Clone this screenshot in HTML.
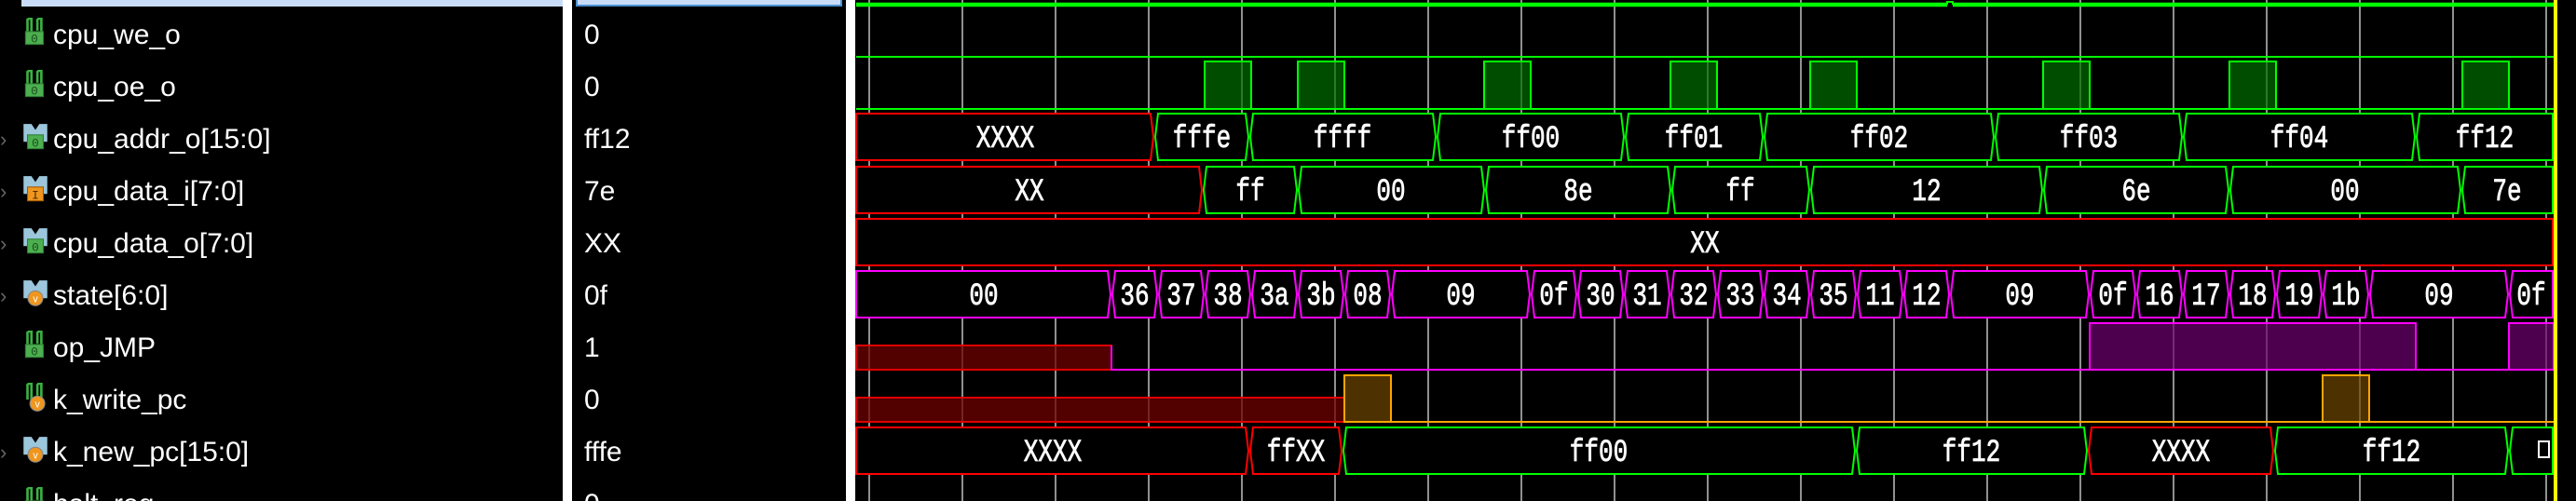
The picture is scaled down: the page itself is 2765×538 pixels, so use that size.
<!DOCTYPE html>
<html><head><meta charset="utf-8">
<style>
html,body{margin:0;padding:0;background:#000;width:2765px;height:538px;overflow:hidden;position:relative}
.n{position:absolute;left:0;width:604px;height:56px;line-height:56px;color:#fff;font-family:"Liberation Sans",sans-serif;font-size:30px;white-space:nowrap;overflow:hidden}
.n span{position:absolute;left:57px;top:0}
.n svg{position:absolute;left:23px;top:9px}
.n i{position:absolute;left:0;top:0;color:#666;font-style:normal;font-size:22px}
.v{position:absolute;left:627px;height:56px;line-height:56px;color:#fff;font-family:"Liberation Sans",sans-serif;font-size:30px;overflow:hidden}
.last{height:24px}
</style></head><body>
<svg width="0" height="0" style="position:absolute">
<defs>
<symbol id="so" viewBox="0 0 28 32"><path d="M6 1v16M6 1h4v16M16 1v12M16 1h4v16" stroke="#3cb043" stroke-width="2.5" fill="none"/><rect x="4" y="14" width="18" height="13" fill="#4caf50" stroke="#2e7d32"/><text x="13" y="25" font-family="Liberation Mono" font-size="12" fill="#1b4d1b" text-anchor="middle">0</text></symbol>
<symbol id="bo" viewBox="0 0 28 32"><path d="M2 2h8l4 6 4-6h8v18H2z" fill="#9cc6dc"/><rect x="6" y="13" width="16" height="14" fill="#4caf50" stroke="#2e7d32"/><text x="14" y="25" font-family="Liberation Mono" font-size="12" fill="#1b4d1b" text-anchor="middle">0</text></symbol>
<symbol id="bi" viewBox="0 0 28 32"><path d="M2 2h8l4 6 4-6h8v18H2z" fill="#9cc6dc"/><rect x="6" y="13" width="16" height="14" fill="#f0961e" stroke="#a05a00"/><text x="14" y="25" font-family="Liberation Mono" font-size="12" fill="#4d2a00" text-anchor="middle">I</text></symbol>
<symbol id="bv" viewBox="0 0 28 32"><path d="M2 2h8l4 6 4-6h8v18H2z" fill="#9cc6dc"/><circle cx="14" cy="20" r="7.5" fill="#f0961e" stroke="#888"/><text x="14" y="24" font-family="Liberation Sans" font-size="10" fill="#fff" text-anchor="middle">v</text></symbol>
<symbol id="sv" viewBox="0 0 28 32"><path d="M6 1v16M6 1h4v16M16 1v12M16 1h4v16" stroke="#3cb043" stroke-width="2.5" fill="none"/><circle cx="16" cy="21" r="7.5" fill="#f0961e" stroke="#888"/><text x="16" y="25" font-family="Liberation Sans" font-size="10" fill="#fff" text-anchor="middle">v</text></symbol>
</defs></svg>

<div style="position:absolute;left:23px;top:0;width:581px;height:7px;background:#c8dcf8"></div>
<div style="position:absolute;left:604px;top:0;width:10px;height:538px;background:#fff"></div>
<div style="position:absolute;left:618px;top:-2px;width:282px;height:5px;background:#c8dcf8;border:2px solid #4a90d0"></div>
<div style="position:absolute;left:908px;top:0;width:10px;height:538px;background:#fff"></div>

<div class="n" style="top:10px"><svg width="30" height="34"><use href="#so"/></svg><span>cpu_we_o</span></div>
<div class="n" style="top:66px"><svg width="30" height="34"><use href="#so"/></svg><span>cpu_oe_o</span></div>
<div class="n" style="top:122px"><i>›</i><svg width="30" height="34"><use href="#bo"/></svg><span>cpu_addr_o[15:0]</span></div>
<div class="n" style="top:178px"><i>›</i><svg width="30" height="34"><use href="#bi"/></svg><span>cpu_data_i[7:0]</span></div>
<div class="n" style="top:234px"><i>›</i><svg width="30" height="34"><use href="#bo"/></svg><span>cpu_data_o[7:0]</span></div>
<div class="n" style="top:290px"><i>›</i><svg width="30" height="34"><use href="#bv"/></svg><span>state[6:0]</span></div>
<div class="n" style="top:346px"><svg width="30" height="34"><use href="#so"/></svg><span>op_JMP</span></div>
<div class="n" style="top:402px"><svg width="30" height="34"><use href="#sv"/></svg><span>k_write_pc</span></div>
<div class="n" style="top:458px"><i>›</i><svg width="30" height="34"><use href="#bv"/></svg><span>k_new_pc[15:0]</span></div>
<div class="n last" style="top:514px"><svg width="30" height="34"><use href="#so"/></svg><span>halt_req</span></div>

<div class="v" style="top:10px">0</div>
<div class="v" style="top:66px">0</div>
<div class="v" style="top:122px">ff12</div>
<div class="v" style="top:178px">7e</div>
<div class="v" style="top:234px">XX</div>
<div class="v" style="top:290px">0f</div>
<div class="v" style="top:346px">1</div>
<div class="v" style="top:402px">0</div>
<div class="v" style="top:458px">fffe</div>
<div class="v last" style="top:514px">0</div>

<svg style="position:absolute;left:0;top:0" width="2765" height="538" viewBox="0 0 2765 538">
<g stroke="#c0c0c0" stroke-width="1.5">
<line x1="933" y1="0" x2="933" y2="538"/><line x1="1033" y1="0" x2="1033" y2="538"/><line x1="1133" y1="0" x2="1133" y2="538"/><line x1="1233" y1="0" x2="1233" y2="538"/><line x1="1333" y1="0" x2="1333" y2="538"/><line x1="1433" y1="0" x2="1433" y2="538"/><line x1="1533" y1="0" x2="1533" y2="538"/><line x1="1633" y1="0" x2="1633" y2="538"/><line x1="1733" y1="0" x2="1733" y2="538"/><line x1="1833" y1="0" x2="1833" y2="538"/><line x1="1933" y1="0" x2="1933" y2="538"/><line x1="2033" y1="0" x2="2033" y2="538"/><line x1="2133" y1="0" x2="2133" y2="538"/><line x1="2233" y1="0" x2="2233" y2="538"/><line x1="2333" y1="0" x2="2333" y2="538"/><line x1="2433" y1="0" x2="2433" y2="538"/><line x1="2533" y1="0" x2="2533" y2="538"/><line x1="2633" y1="0" x2="2633" y2="538"/><line x1="2733" y1="0" x2="2733" y2="538"/>
</g>
<path d="M919 5H2090M2096 5H2741" stroke="#00ff00" stroke-width="4.5"/>
<path d="M2090 5v-3h6v3" stroke="#00ff00" stroke-width="2" fill="none"/>
<line x1="919" y1="61" x2="2741" y2="61" stroke="#00ff00" stroke-width="2"/>
<line x1="919" y1="117" x2="2741" y2="117" stroke="#00ff00" stroke-width="2"/>
<g fill="rgba(0,110,0,0.7)" stroke="#00ff00" stroke-width="2">
<rect x="1293" y="66" width="50" height="51"/><rect x="1393" y="66" width="50" height="51"/><rect x="1593" y="66" width="50" height="51"/><rect x="1793" y="66" width="50" height="51"/><rect x="1943" y="66" width="50" height="51"/><rect x="2193" y="66" width="50" height="51"/><rect x="2393" y="66" width="50" height="51"/><rect x="2643" y="66" width="50" height="51"/>
</g>
<g fill="#000" stroke-width="2">
<polygon stroke="#ff0000" points="919,122 1235,122 1238,147 1235,172 919,172"/>
<polygon stroke="#00ff00" points="1240,147 1243,122 1337,122 1340,147 1337,172 1243,172"/>
<polygon stroke="#00ff00" points="1342,147 1345,122 1538,122 1541,147 1538,172 1345,172"/>
<polygon stroke="#00ff00" points="1543,147 1546,122 1740,122 1743,147 1740,172 1546,172"/>
<polygon stroke="#00ff00" points="1745,147 1748,122 1889,122 1892,147 1889,172 1748,172"/>
<polygon stroke="#00ff00" points="1894,147 1897,122 2137,122 2140,147 2137,172 1897,172"/>
<polygon stroke="#00ff00" points="2142,147 2145,122 2339,122 2342,147 2339,172 2145,172"/>
<polygon stroke="#00ff00" points="2344,147 2347,122 2589,122 2592,147 2589,172 2347,172"/>
<polygon stroke="#00ff00" points="2594,147 2597,122 2740,122 2740,172 2597,172"/>
<polygon stroke="#ff0000" points="919,179 1287,179 1290,204 1287,229 919,229"/>
<polygon stroke="#00ff00" points="1292,204 1295,179 1389,179 1392,204 1389,229 1295,229"/>
<polygon stroke="#00ff00" points="1394,204 1397,179 1590,179 1593,204 1590,229 1397,229"/>
<polygon stroke="#00ff00" points="1595,204 1598,179 1790,179 1793,204 1790,229 1598,229"/>
<polygon stroke="#00ff00" points="1795,204 1798,179 1939,179 1942,204 1939,229 1798,229"/>
<polygon stroke="#00ff00" points="1944,204 1947,179 2189,179 2192,204 2189,229 1947,229"/>
<polygon stroke="#00ff00" points="2194,204 2197,179 2389,179 2392,204 2389,229 2197,229"/>
<polygon stroke="#00ff00" points="2394,204 2397,179 2638,179 2641,204 2638,229 2397,229"/>
<polygon stroke="#00ff00" points="2643,204 2646,179 2740,179 2740,229 2646,229"/>
<polygon stroke="#ff0000" points="919,235 2740,235 2740,285 919,285"/>
<g stroke="#ff00ff">
<polygon points="919,291 1189,291 1192,316 1189,341 919,341"/>
<polygon points="1194,316 1197,291 1239,291 1242,316 1239,341 1197,341"/>
<polygon points="1244,316 1247,291 1289,291 1292,316 1289,341 1247,341"/>
<polygon points="1294,316 1297,291 1339,291 1342,316 1339,341 1297,341"/>
<polygon points="1344,316 1347,291 1389,291 1392,316 1389,341 1347,341"/>
<polygon points="1394,316 1397,291 1439,291 1442,316 1439,341 1397,341"/>
<polygon points="1444,316 1447,291 1489,291 1492,316 1489,341 1447,341"/>
<polygon points="1494,316 1497,291 1639,291 1642,316 1639,341 1497,341"/>
<polygon points="1644,316 1647,291 1689,291 1692,316 1689,341 1647,341"/>
<polygon points="1694,316 1697,291 1739,291 1742,316 1739,341 1697,341"/>
<polygon points="1744,316 1747,291 1789,291 1792,316 1789,341 1747,341"/>
<polygon points="1794,316 1797,291 1839,291 1842,316 1839,341 1797,341"/>
<polygon points="1844,316 1847,291 1889,291 1892,316 1889,341 1847,341"/>
<polygon points="1894,316 1897,291 1939,291 1942,316 1939,341 1897,341"/>
<polygon points="1944,316 1947,291 1989,291 1992,316 1989,341 1947,341"/>
<polygon points="1994,316 1997,291 2039,291 2042,316 2039,341 1997,341"/>
<polygon points="2044,316 2047,291 2089,291 2092,316 2089,341 2047,341"/>
<polygon points="2094,316 2097,291 2239,291 2242,316 2239,341 2097,341"/>
<polygon points="2244,316 2247,291 2289,291 2292,316 2289,341 2247,341"/>
<polygon points="2294,316 2297,291 2339,291 2342,316 2339,341 2297,341"/>
<polygon points="2344,316 2347,291 2389,291 2392,316 2389,341 2347,341"/>
<polygon points="2394,316 2397,291 2439,291 2442,316 2439,341 2397,341"/>
<polygon points="2444,316 2447,291 2489,291 2492,316 2489,341 2447,341"/>
<polygon points="2494,316 2497,291 2539,291 2542,316 2539,341 2497,341"/>
<polygon points="2544,316 2547,291 2689,291 2692,316 2689,341 2547,341"/>
<polygon points="2694,316 2697,291 2740,291 2740,341 2697,341"/>
</g>
<polygon stroke="#ff0000" points="919,459 1337,459 1340,484 1337,509 919,509"/>
<polygon stroke="#ff0000" points="1342,484 1345,459 1437,459 1440,484 1437,509 1345,509"/>
<polygon stroke="#00ff00" points="1442,484 1445,459 1988,459 1991,484 1988,509 1445,509"/>
<polygon stroke="#00ff00" points="1993,484 1996,459 2237,459 2240,484 2237,509 1996,509"/>
<polygon stroke="#ff0000" points="2242,484 2245,459 2437,459 2440,484 2437,509 2245,509"/>
<polygon stroke="#00ff00" points="2442,484 2445,459 2689,459 2692,484 2689,509 2445,509"/>
<polygon stroke="#00ff00" points="2694,484 2697,459 2740,459 2740,509 2697,509"/>
</g>
<rect x="919" y="371" width="274" height="26" fill="rgba(110,0,0,0.75)" stroke="#e00000" stroke-width="2"/>
<path d="M1193 371V397H2243" stroke="#ff00ff" stroke-width="2" fill="none"/>
<rect x="2243" y="347" width="350" height="50" fill="rgba(110,0,110,0.7)" stroke="#ff00ff" stroke-width="2"/>
<path d="M2593 397H2693" stroke="#ff00ff" stroke-width="2"/>
<rect x="2693" y="347" width="48" height="50" fill="rgba(110,0,110,0.7)" stroke="#ff00ff" stroke-width="2"/>
<rect x="919" y="427" width="524" height="26" fill="rgba(110,0,0,0.75)" stroke="#e00000" stroke-width="2"/>
<rect x="1443" y="403" width="50" height="50" fill="rgba(110,70,0,0.7)" stroke="#ffa500" stroke-width="2"/>
<path d="M1493 453H2493M2543 453H2741" stroke="#ffa500" stroke-width="2"/>
<rect x="2493" y="403" width="50" height="50" fill="rgba(110,70,0,0.7)" stroke="#ffa500" stroke-width="2"/>
<g transform="scale(1,1.3)" font-family="Liberation Mono, monospace" font-size="26" fill="#fff" stroke="#fff" stroke-width="0.6" text-anchor="middle">
<text x="1079" y="121.5">XXXX</text><text x="1290" y="121.5">fffe</text><text x="1441" y="121.5">ffff</text><text x="1643" y="121.5">ff00</text><text x="1818" y="121.5">ff01</text><text x="2017" y="121.5">ff02</text><text x="2242" y="121.5">ff03</text><text x="2468" y="121.5">ff04</text><text x="2667" y="121.5">ff12</text>
<text x="1105" y="165.4">XX</text><text x="1342" y="165.4">ff</text><text x="1493" y="165.4">00</text><text x="1694" y="165.4">8e</text><text x="1868" y="165.4">ff</text><text x="2068" y="165.4">12</text><text x="2293" y="165.4">6e</text><text x="2517" y="165.4">00</text><text x="2691" y="165.4">7e</text>
<text x="1830" y="208.5">XX</text>
<text x="1056" y="251.5">00</text><text x="1218" y="251.5">36</text><text x="1268" y="251.5">37</text><text x="1318" y="251.5">38</text><text x="1368" y="251.5">3a</text><text x="1418" y="251.5">3b</text><text x="1468" y="251.5">08</text><text x="1568" y="251.5">09</text><text x="1668" y="251.5">0f</text><text x="1718" y="251.5">30</text><text x="1768" y="251.5">31</text><text x="1818" y="251.5">32</text><text x="1868" y="251.5">33</text><text x="1918" y="251.5">34</text><text x="1968" y="251.5">35</text><text x="2018" y="251.5">11</text><text x="2068" y="251.5">12</text><text x="2168" y="251.5">09</text><text x="2268" y="251.5">0f</text><text x="2318" y="251.5">16</text><text x="2368" y="251.5">17</text><text x="2418" y="251.5">18</text><text x="2468" y="251.5">19</text><text x="2518" y="251.5">1b</text><text x="2618" y="251.5">09</text><text x="2717" y="251.5">0f</text>
<text x="1130" y="380.8">XXXX</text><text x="1391" y="380.8">ffXX</text><text x="1716" y="380.8">ff00</text><text x="2116" y="380.8">ff12</text><text x="2341" y="380.8">XXXX</text><text x="2567" y="380.8">ff12</text>
</g>
<rect x="2725" y="474" width="11" height="17" fill="none" stroke="#fff" stroke-width="2"/>
<rect x="2741" y="0" width="4" height="538" fill="#ffff00"/>
</svg>
</body></html>
